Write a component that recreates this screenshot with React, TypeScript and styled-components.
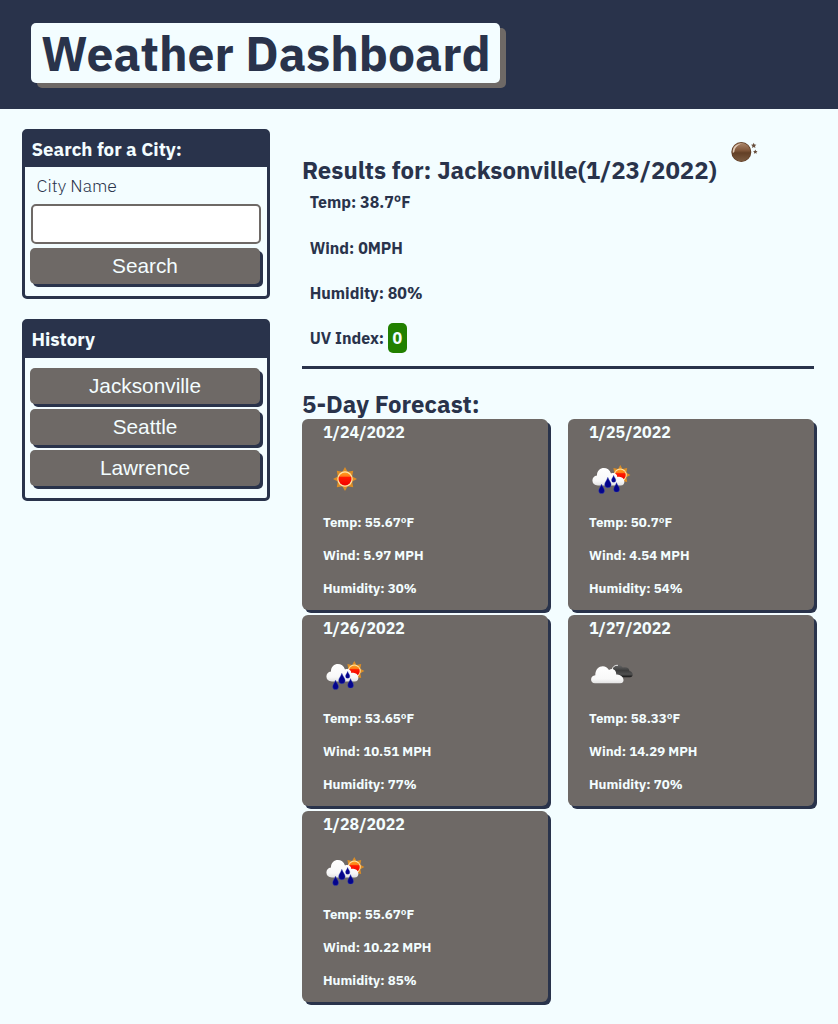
import React from "react";
import styled, { createGlobalStyle } from "styled-components";

const navy = "#29334b";
const taupe = "#6e6966";
const ice = "#f3fdff";

const GlobalStyle = createGlobalStyle`
  * { box-sizing: border-box; }
  body {
    margin: 0;
    background: ${ice};
    color: ${navy};
    font-family: "IBM Plex Sans", "Noto Sans", sans-serif;
  }
  h1, h2, h3, p { margin: 0; }
`;

const Header = styled.header`
  height: 109px;
  padding: 23px 31px 0;
  background: ${navy};
`;

const Title = styled.h1`
  width: 469px;
  height: 60px;
  padding-left: 10px;
  border-radius: 5px;
  background: ${ice};
  box-shadow: 6px 5px ${taupe};
  font-size: 48px;
  font-weight: 700;
  line-height: 61px;
  white-space: nowrap;
`;

const Layout = styled.div`
  display: grid;
  grid-template-columns: 248px 512px;
  column-gap: 32px;
  align-items: start;
  padding: 20px 24px 20px 22px;
`;

const Sidebar = styled.aside`
  display: grid;
  grid-template-columns: 248px;
  gap: 20px;
`;

const Panel = styled.section`
  border: 3px solid ${navy};
  border-radius: 5px;
`;

const PanelTitle = styled.h3<{ $height: number }>`
  height: ${(p) => p.$height}px;
  padding-left: 6.4px;
  background: ${navy};
  color: ${ice};
  font-size: 18.72px;
  font-weight: 700;
  line-height: 35px;
`;

const SearchForm = styled.form`
  display: flex;
  flex-direction: column;
  padding: 0 5px 12px;
`;

const Label = styled.label`
  height: 37px;
  padding-left: 6.6px;
  font-size: 17.6px;
  font-weight: 300;
  line-height: 37px;
`;

const Input = styled.input`
  width: 230px;
  height: 40px;
  margin: 0 0 4px 1px;
  border: 2px solid ${taupe};
  border-radius: 5px;
  background: #fff;
`;

const Button = styled.button`
  width: 230px;
  height: 36px;
  padding: 0;
  border: 0;
  border-radius: 5px;
  background: ${taupe};
  box-shadow: 3px 3px ${navy};
  color: ${ice};
  font-family: "Liberation Sans", Arial, sans-serif;
  font-size: 20.8px;
  line-height: 36px;
`;

const HistoryList = styled.div`
  display: flex;
  flex-direction: column;
  gap: 5px;
  padding: 10px 5px 12px;
`;

const Main = styled.main`
  display: flex;
  flex-direction: column;
`;

const Current = styled.section`
  height: 240px;
  border-bottom: 3px solid ${navy};
`;

const ResultsRow = styled.div`
  display: flex;
  height: 58.4px;
`;

const Heading = styled.h2`
  font-size: 24px;
  font-weight: 700;
  line-height: 32px;
  white-space: nowrap;
`;

const ResultsHeading = styled(Heading)`
  margin-top: 25px;
  width: 415px;
`;

const Stat = styled.p`
  height: 45.3px;
  padding-left: 7.7px;
  font-size: 16px;
  font-weight: 700;
  line-height: 30px;
`;

const UvBadge = styled.span`
  display: inline-block;
  width: 19px;
  height: 30px;
  border-radius: 5px;
  background: #218000;
  color: ${ice};
  text-align: center;
`;

const ForecastHeading = styled(Heading)`
  height: 50px;
  padding-top: 19px;
`;

const Cards = styled.div`
  display: grid;
  grid-template-columns: repeat(2, 246px);
  gap: 5px 20px;
`;

const Card = styled.article`
  height: 191px;
  padding-left: 21px;
  border-radius: 6px;
  background: ${taupe};
  box-shadow: 3px 3px ${navy};
  color: ${ice};
`;

const CardDate = styled.h3`
  height: 35px;
  font-size: 16px;
  font-weight: 700;
  line-height: 27px;
`;

const CardStat = styled.p`
  height: 33px;
  font-size: 13.28px;
  font-weight: 700;
  line-height: 20px;
`;

const WeatherIcon = styled.svg`
  display: block;
  width: 50px;
  height: 50px;
  margin: 0 0 8px -3px;
`;

const MoonIcon = styled.svg`
  display: block;
  width: 50px;
  height: 50px;
  margin-top: -2px;
`;

const GradientDefs = styled.svg`
  display: block;
  width: 0;
  height: 0;
`;

type Sky = "sun" | "rain" | "clouds";

const SunShape = () => (
  <g>
    <path
      d="M0-12 L2.6-7.2 L8.2-8.2 L7.2-2.6 L12 0 L7.2 2.6 L8.2 8.2 L2.6 7.2 L0 12 L-2.6 7.2 L-8.2 8.2 L-7.2 2.6 L-12 0 L-7.2-2.6 L-8.2-8.2 L-2.6-7.2Z"
      fill="#dc8d25"
    />
    <circle r="7.7" fill="#ffe3a6" />
    <circle r="6.5" fill="url(#sunFill)" />
  </g>
);

const dropPath = "M0-5C1-2 3.2-.3 3.2 2A3 3 0 0 1-3 2C-3-.3-.8-2 0-5Z";

const Gradients = () => (
  <GradientDefs aria-hidden="true">
    <defs>
      <linearGradient id="sunFill" x1="0" y1="0" x2="0" y2="1">
        <stop offset="0" stopColor="#ffa01c" />
        <stop offset="0.28" stopColor="#ff7a18" />
        <stop offset="0.38" stopColor="#ff1a00" />
        <stop offset="1" stopColor="#f00000" />
      </linearGradient>
      <linearGradient id="cloudFill" x1="0" y1="0" x2="0" y2="1">
        <stop offset="0" stopColor="#ffffff" />
        <stop offset="0.75" stopColor="#f8f8f8" />
        <stop offset="1" stopColor="#e2e2e2" />
      </linearGradient>
      <linearGradient id="darkCloud" x1="0" y1="0" x2="0" y2="1">
        <stop offset="0" stopColor="#666" />
        <stop offset="0.45" stopColor="#3c3c3c" />
        <stop offset="0.75" stopColor="#505050" />
        <stop offset="1" stopColor="#111" />
      </linearGradient>
      <linearGradient id="moonFill" x1="0" y1="0" x2="0" y2="1">
        <stop offset="0" stopColor="#ab866a" />
        <stop offset="0.4" stopColor="#83593c" />
        <stop offset="0.55" stopColor="#634026" />
        <stop offset="1" stopColor="#7a5a40" />
      </linearGradient>
    </defs>
  </GradientDefs>
);

const SkyIcon = ({ sky }: { sky: Sky }) => (
  <WeatherIcon viewBox="0 0 50 50" aria-hidden="true">
    {sky === "sun" && (
      <g transform="translate(25 25)">
        <SunShape />
      </g>
    )}
    {sky === "rain" && (
      <>
        <g transform="translate(34.3 21) scale(.84)">
          <SunShape />
        </g>
        <path
          d="M12 31.500C4.500 31.500 5 21.800 11 21.500C10.800 12.500 22.500 11.300 25 19.500C28 18 31.500 20 31.300 23C39 21 41 31.500 34.500 31.500Z"
          fill="url(#cloudFill)"
        />
        <g fill="#04048c" stroke="#4050b8" strokeWidth=".4">
          <path d={dropPath} transform="translate(15.500 34.800) scale(.94)" />
          <path d={dropPath} transform="translate(21.800 28.500) scale(1.04)" />
          <path d={dropPath} transform="translate(27.600 24.800) scale(.7)" />
          <path d={dropPath} transform="translate(30.500 33.300) scale(.94)" />
        </g>
      </>
    )}
    {sky === "clouds" && (
      <>
        <path
          d="M26 22C27 14.500 34 13 36.800 17.500C41.500 16.500 43 18.500 43.500 21C48 22 47.500 27.300 44 27.300H31Z"
          fill="url(#darkCloud)"
        />
        <path d="M26 20C26.500 16.500 29 15 32 15.300" fill="none" stroke="#e6e6e6" strokeWidth="1" />
        <path
          d="M9 33.300C3.500 33.300 4 25.500 9.300 25.300C9 15.500 19.500 13.300 23 20C27 17.500 30.500 20.500 30.200 24.500C37.500 23.500 40.500 33.300 34 33.300Z"
          fill="url(#cloudFill)"
        />
      </>
    )}
  </WeatherIcon>
);

const forecast: { date: string; sky: Sky; temp: string; wind: string; humidity: string }[] = [
  { date: "1/24/2022", sky: "sun", temp: "55.67", wind: "5.97", humidity: "30" },
  { date: "1/25/2022", sky: "rain", temp: "50.7", wind: "4.54", humidity: "54" },
  { date: "1/26/2022", sky: "rain", temp: "53.65", wind: "10.51", humidity: "77" },
  { date: "1/27/2022", sky: "clouds", temp: "58.33", wind: "14.29", humidity: "70" },
  { date: "1/28/2022", sky: "rain", temp: "55.67", wind: "10.22", humidity: "85" },
];

const history = ["Jacksonville", "Seattle", "Lawrence"];

export default function App() {
  return (
    <>
      <GlobalStyle />
      <Gradients />
      <Header>
        <Title>Weather Dashboard</Title>
      </Header>
      <Layout>
        <Sidebar>
          <Panel>
            <PanelTitle $height={35}>Search for a City:</PanelTitle>
            <SearchForm onSubmit={(e) => e.preventDefault()}>
              <Label htmlFor="city">City Name</Label>
              <Input id="city" />
              <Button>Search</Button>
            </SearchForm>
          </Panel>
          <Panel>
            <PanelTitle $height={36}>History</PanelTitle>
            <HistoryList>
              {history.map((city) => (
                <Button key={city}>{city}</Button>
              ))}
            </HistoryList>
          </Panel>
        </Sidebar>
        <Main>
          <Current>
            <ResultsRow>
              <ResultsHeading>Results for: Jacksonville(1/23/2022)</ResultsHeading>
              <MoonIcon viewBox="0 0 50 50" aria-hidden="true">
                <circle cx="24.300" cy="25" r="10" fill="#5d3a22" />
                <circle cx="24.300" cy="25" r="9.200" fill="url(#moonFill)" />
                <path
                  d="M15.800 26C15.300 20 19.300 16.500 25.300 16.600C20.300 18 17.800 21 17.300 25Z"
                  fill="#e0c9b5"
                />
                <path
                  d="M36.700 15.800l.8 1.700 1.900.2-1.400 1.300.4 1.900-1.700-.9-1.700.9.4-1.900-1.400-1.300 1.900-.2Z"
                  fill="#69503f"
                />
                <path
                  d="M38.300 22.500l.7 1.400 1.500.2-1.100 1.100.3 1.500-1.400-.7-1.400.7.3-1.500-1.100-1.100 1.500-.2Z"
                  fill="#69503f"
                />
              </MoonIcon>
            </ResultsRow>
            <Stat>Temp: 38.7°F</Stat>
            <Stat>Wind: 0MPH</Stat>
            <Stat>Humidity: 80%</Stat>
            <Stat>
              UV Index: <UvBadge>0</UvBadge>
            </Stat>
          </Current>
          <ForecastHeading>5-Day Forecast:</ForecastHeading>
          <Cards>
            {forecast.map((day) => (
              <Card key={day.date}>
                <CardDate>{day.date}</CardDate>
                <SkyIcon sky={day.sky} />
                <CardStat>Temp: {day.temp}ºF</CardStat>
                <CardStat>Wind: {day.wind} MPH</CardStat>
                <CardStat>Humidity: {day.humidity}%</CardStat>
              </Card>
            ))}
          </Cards>
        </Main>
      </Layout>
    </>
  );
}
